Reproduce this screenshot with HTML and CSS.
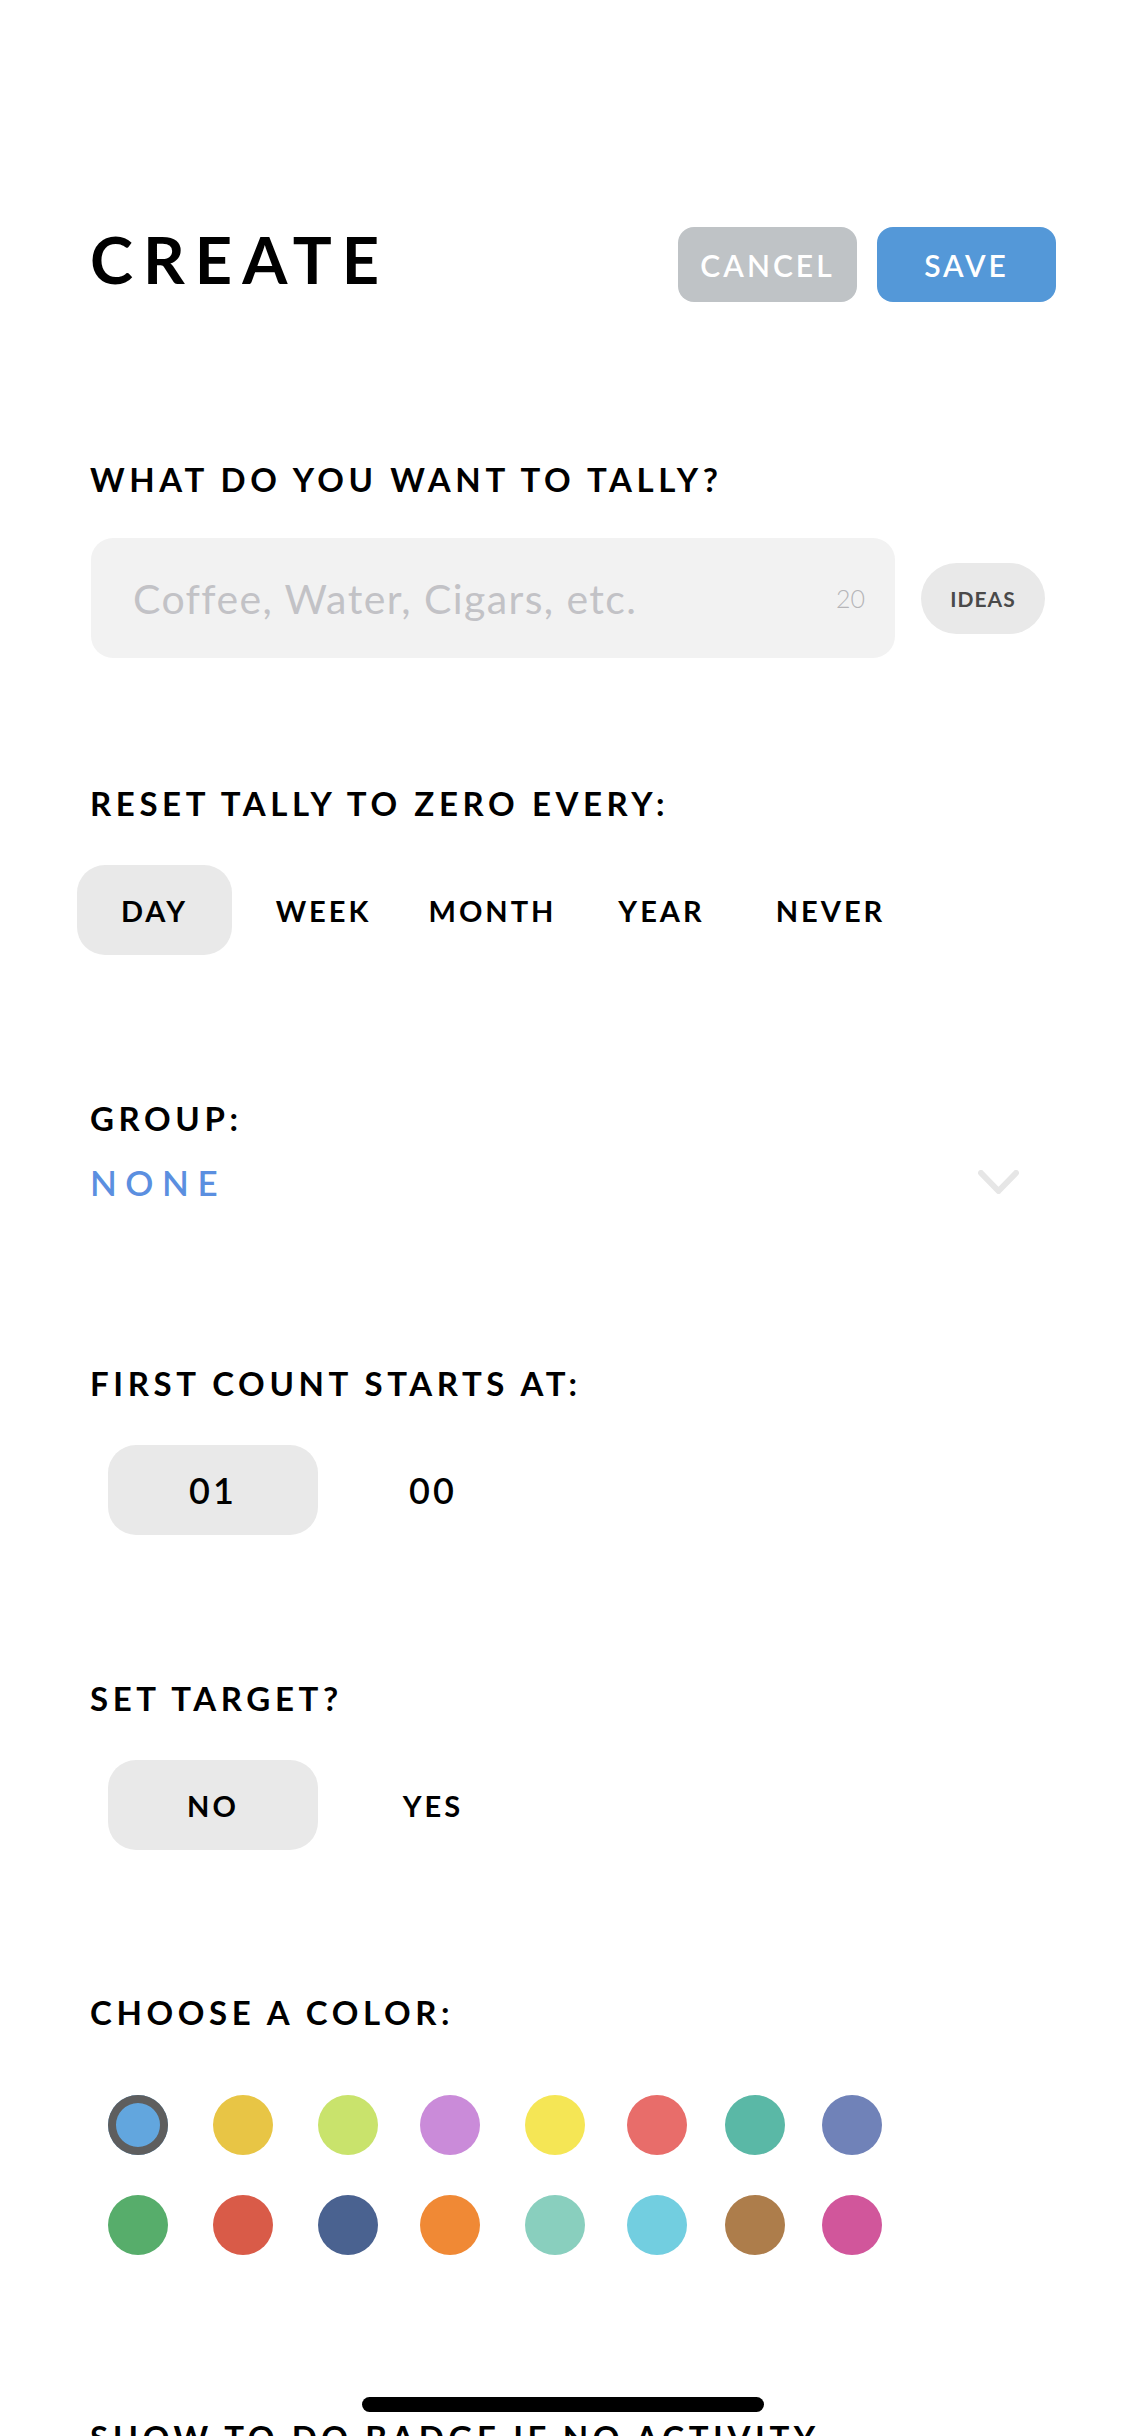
FILE: index.html
```html
<!DOCTYPE html>
<html lang="en">
<head>
<meta charset="utf-8">
<title>Create</title>
<link rel="stylesheet" href="styles.css">
</head>
<body>
<div class="screen">
  <header class="topbar">
    <h1 class="title">CREATE</h1>
    <div class="actions">
      <button class="btn btn-cancel">CANCEL</button>
      <button class="btn btn-save">SAVE</button>
    </div>
  </header>

  <section class="section s-name">
    <h2 class="label">WHAT DO YOU WANT TO TALLY?</h2>
    <div class="name-row">
      <div class="field">
        <span class="placeholder">Coffee, Water, Cigars, etc.</span>
        <span class="count">20</span>
      </div>
      <button class="ideas">IDEAS</button>
    </div>
  </section>

  <section class="section s-reset">
    <h2 class="label">RESET TALLY TO ZERO EVERY:</h2>
    <div class="seg">
      <div class="opt on">DAY</div>
      <div class="opt">WEEK</div>
      <div class="opt">MONTH</div>
      <div class="opt">YEAR</div>
      <div class="opt">NEVER</div>
    </div>
  </section>

  <section class="section s-group">
    <h2 class="label">GROUP:</h2>
    <div class="group-row">
      <span class="group-value">NONE</span>
      <svg class="chev" width="41" height="24" viewBox="0 0 41 24"><polyline points="3,3 20.5,21 38,3" fill="none" stroke="#E6E6E6" stroke-width="6" stroke-linecap="round" stroke-linejoin="round"/></svg>
    </div>
  </section>

  <section class="section s-start">
    <h2 class="label">FIRST COUNT STARTS AT:</h2>
    <div class="pair">
      <div class="opt wide num on">01</div>
      <div class="opt wide num">00</div>
    </div>
  </section>

  <section class="section s-target">
    <h2 class="label">SET TARGET?</h2>
    <div class="pair">
      <div class="opt wide on">NO</div>
      <div class="opt wide">YES</div>
    </div>
  </section>

  <section class="section s-color">
    <h2 class="label">CHOOSE A COLOR:</h2>
    <div class="swatches">
      <span class="sw sel c1"></span>
      <span class="sw c2"></span>
      <span class="sw c3"></span>
      <span class="sw c4"></span>
      <span class="sw c5"></span>
      <span class="sw c6"></span>
      <span class="sw c7"></span>
      <span class="sw c8"></span>
      <span class="sw c9"></span>
      <span class="sw c10"></span>
      <span class="sw c11"></span>
      <span class="sw c12"></span>
      <span class="sw c13"></span>
      <span class="sw c14"></span>
      <span class="sw c15"></span>
      <span class="sw c16"></span>
    </div>
  </section>

  <section class="section s-badge">
    <h2 class="label">SHOW TO DO BADGE IF NO ACTIVITY</h2>
  </section>
</div>
<div class="home-indicator"></div>
</body>
</html>
```

FILE: styles.css
```css
html, body {
  margin: 0;
  padding: 0;
  background: #ffffff;
}
body {
  font-family: "Lato", "Open Sans", "Liberation Sans", sans-serif;
  color: #000000;
  overflow: hidden;
}
.screen {
  box-sizing: border-box;
  height: 2436px;
  overflow: hidden;
  padding: 227px 0 0 90px;
}
.topbar {
  display: flex;
  align-items: center;
  justify-content: space-between;
  height: 75px;
  padding-right: 69px;
}
.title {
  margin: 0 0 10px 0;
  font-size: 65px;
  font-weight: 700;
  letter-spacing: 10px;
  line-height: 1;
}
.actions {
  display: flex;
  gap: 20px;
}
.btn {
  width: 179px;
  height: 75px;
  border: 0;
  border-radius: 16px;
  padding: 0;
  color: #ffffff;
  font-family: inherit;
  font-size: 30px;
  font-weight: 600;
  letter-spacing: 3px;
}
.btn-cancel { background: #BFC3C6; }
.btn-save { background: #5498D8; }

.label {
  margin: 0;
  font-size: 33px;
  font-weight: 700;
  letter-spacing: 4.6px;
  line-height: 40px;
  white-space: nowrap;
}
.s-name { margin-top: 157px; }
.s-reset { margin-top: 125px; }
.s-group { margin-top: 143px; }
.s-start { margin-top: 160px; }
.s-target { margin-top: 143px; }
.s-color { margin-top: 142px; }
.s-badge { margin-top: 162px; }

.name-row {
  display: flex;
  align-items: center;
  margin-top: 39px;
}
.field {
  box-sizing: border-box;
  width: 804px;
  height: 120px;
  margin-left: 1px;
  border-radius: 22px;
  background: #F2F2F2;
  display: flex;
  align-items: center;
  justify-content: space-between;
  padding: 0 30px 0 42px;
}
.placeholder {
  font-size: 41px;
  font-weight: 400;
  letter-spacing: 1.4px;
  color: #C2C2C6;
}
.count {
  font-size: 25px;
  font-weight: 300;
  color: #B5B5B8;
}
.ideas {
  margin-left: 26px;
  width: 124px;
  height: 71px;
  border: 0;
  border-radius: 36px;
  background: #E9E9E9;
  padding: 0;
  font-family: inherit;
  font-size: 21px;
  font-weight: 700;
  letter-spacing: 1px;
  color: #4A4A4A;
}

.seg {
  display: flex;
  gap: 14px;
  margin-top: 42px;
  margin-left: -13px;
}
.opt {
  width: 155px;
  height: 90px;
  display: flex;
  align-items: center;
  justify-content: center;
  border-radius: 28px;
  font-size: 29px;
  font-weight: 700;
  letter-spacing: 3px;
}
.opt.on { background: #E9E9E9; }
.pair {
  display: flex;
  gap: 10px;
  margin-top: 42px;
  margin-left: 18px;
}
.opt.wide { width: 210px; }
.opt.num {
  font-size: 36px;
  font-weight: 600;
  letter-spacing: 3px;
}

.group-row {
  display: flex;
  align-items: center;
  justify-content: space-between;
  margin-top: 23px;
  padding-right: 106px;
}
.group-value {
  font-size: 35px;
  font-weight: 600;
  color: #5B8FE0;
  letter-spacing: 8.5px;
  line-height: 42px;
}
.chev { display: block; }

.swatches {
  display: grid;
  grid-template-columns: 105px 105px 102px 105px 102px 98px 97px 60px;
  row-gap: 40px;
  margin-top: 63px;
  margin-left: 18px;
}
.sw {
  display: block;
  width: 60px;
  height: 60px;
  border-radius: 50%;
}
.sw.sel { box-shadow: inset 0 0 0 8px #5E5E5E; }
.c1 { background: #62A6DE; }
.c2 { background: #E8C545; }
.c3 { background: #C9E36C; }
.c4 { background: #CA8BD9; }
.c5 { background: #F5E655; }
.c6 { background: #E86D6A; }
.c7 { background: #5AB8A6; }
.c8 { background: #7082B8; }
.c9 { background: #57AD6B; }
.c10 { background: #D95B48; }
.c11 { background: #4A6290; }
.c12 { background: #F08935; }
.c13 { background: #89CFBE; }
.c14 { background: #72CEE0; }
.c15 { background: #AD7D4B; }
.c16 { background: #D1569B; }

.home-indicator {
  position: fixed;
  left: 0;
  right: 0;
  bottom: 24px;
  margin: 0 auto;
  width: 402px;
  height: 15px;
  border-radius: 8px;
  background: #000000;
}
```
